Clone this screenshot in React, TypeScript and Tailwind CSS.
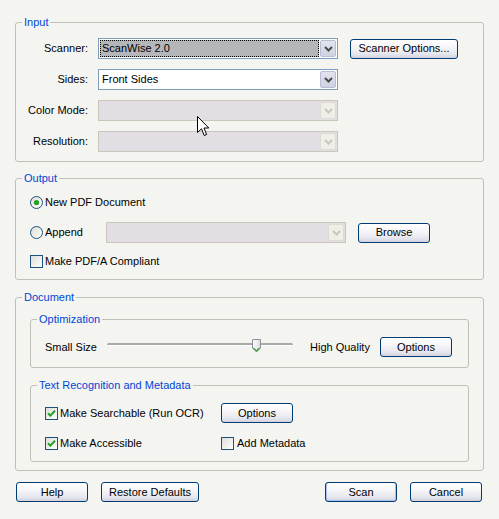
import React from "react";

const BTN =
  "h-[20px] rounded-[3px] border border-[#003c74] bg-[linear-gradient(180deg,#ffffff_0%,#f6f6f9_40%,#e6e6ee_78%,#d2d2e0_100%)] text-[11px] leading-[13px] text-black flex items-center justify-center";

function Btn({ label, cls }: { label: string; cls: string }) {
  return (
    <button type="button" className={`${BTN} ${cls}`}>
      {label}
    </button>
  );
}

function Chevron({ color }: { color: string }) {
  return (
    <svg width="9" height="6" viewBox="0 0 9 6">
      <path d="M1 1 L4.5 4.5 L8 1" fill="none" stroke={color} strokeWidth="2" />
    </svg>
  );
}

function Select({
  text,
  cls,
  disabled,
  focused,
}: {
  text?: string;
  cls: string;
  disabled?: boolean;
  focused?: boolean;
}) {
  return (
    <div
      className={`flex h-[21px] border ${cls} ${
        disabled ? "border-[#c9c7ba] bg-[#e3dee3]" : "border-[#7f9db9] bg-white"
      }`}
    >
      {focused ? (
        <div className="flex-1 p-[1px]">
          <div className="h-full flex items-center bg-[#b4b6ba] border border-dotted border-black pl-[1px]">
            {text}
          </div>
        </div>
      ) : (
        <div className="flex-1 flex items-center pl-[3px]">{text}</div>
      )}
      <div
        className={`w-[16px] my-[1px] mr-[1px] flex items-center justify-center rounded-[2px] border ${
          disabled
            ? "border-[#dedcd2] bg-[#efeee9]"
            : "border-[#b7bdd3] bg-[linear-gradient(180deg,#e2e3ee_0%,#d0d2e2_100%)]"
        }`}
      >
        <Chevron color={disabled ? "#c9c7bb" : "#4a4a4a"} />
      </div>
    </div>
  );
}

function Radio({ checked }: { checked?: boolean }) {
  return (
    <svg width="13" height="13" viewBox="0 0 13 13" className="shrink-0">
      <defs>
        <linearGradient id="rgrad" x1="0" y1="0" x2="1" y2="1">
          <stop offset="0" stopColor="#dcdcd5" />
          <stop offset="1" stopColor="#ffffff" />
        </linearGradient>
      </defs>
      <circle cx="6.5" cy="6.5" r="6" fill="url(#rgrad)" stroke="#1c5180" />
      {checked && <circle cx="6.5" cy="6.5" r="2.6" fill="#21a121" />}
    </svg>
  );
}

function Checkbox({ checked }: { checked?: boolean }) {
  return (
    <svg width="13" height="13" viewBox="0 0 13 13" className="shrink-0">
      <defs>
        <linearGradient id="cgrad" x1="0" y1="0" x2="1" y2="1">
          <stop offset="0" stopColor="#dcdcd7" />
          <stop offset="1" stopColor="#ffffff" />
        </linearGradient>
      </defs>
      <rect x="0.5" y="0.5" width="12" height="12" fill="url(#cgrad)" stroke="#1c5180" />
      {checked && (
        <path d="M3 6.2 L5.3 8.6 L10 3.8" fill="none" stroke="#21a121" strokeWidth="2" />
      )}
    </svg>
  );
}

const FS = "rounded-[3px] border border-[#c0c0bb]";
const LG = "ml-[6px] px-[2px] leading-[14px] text-[#0046d5]";

export default function App() {
  return (
    <div className="relative w-[499px] h-[519px] overflow-hidden bg-[#f4f5f1] px-[15px] pt-[15px] font-['Liberation_Sans',Arial,sans-serif] text-[11px] leading-[13px] text-black">
      {/* Input */}
      <fieldset className={FS}>
        <legend className={LG}>Input</legend>
        <div className="flex flex-col gap-[10px] pt-[9px] pb-[9px]">
          <div className="flex items-center h-[21px]">
            <div className="w-[72px] mr-[10px] text-right">Scanner:</div>
            <Select cls="w-[240px]" text="ScanWise 2.0" focused />
            <Btn label="Scanner Options..." cls="w-[108px] ml-[12px]" />
          </div>
          <div className="flex items-center h-[21px]">
            <div className="w-[72px] mr-[10px] text-right">Sides:</div>
            <Select cls="w-[240px]" text="Front Sides" />
          </div>
          <div className="flex items-center h-[21px]">
            <div className="w-[72px] mr-[10px] text-right">Color Mode:</div>
            <Select cls="w-[240px]" disabled />
          </div>
          <div className="flex items-center h-[21px]">
            <div className="w-[72px] mr-[10px] text-right">Resolution:</div>
            <Select cls="w-[240px]" disabled />
          </div>
        </div>
      </fieldset>

      {/* Output */}
      <fieldset className={`${FS} mt-[9px]`}>
        <legend className={LG}>Output</legend>
        <div className="pl-[14px] pt-[7px] pb-[7px]">
          <div className="flex items-center h-[21px] gap-[2px]">
            <Radio checked />
            <span>New PDF Document</span>
          </div>
          <div className="mt-[9px] flex items-center h-[21px]">
            <div className="w-[76px] flex items-center gap-[2px]">
              <Radio />
              <span>Append</span>
            </div>
            <Select cls="w-[240px]" disabled />
            <Btn label="Browse" cls="w-[72px] ml-[12px]" />
          </div>
          <div className="mt-[8px] flex items-center h-[21px] gap-[2px]">
            <Checkbox />
            <span>Make PDF/A Compliant</span>
          </div>
        </div>
      </fieldset>

      {/* Document */}
      <fieldset className={`${FS} mt-[10px]`}>
        <legend className={LG}>Document</legend>
        <div className="px-[14px] pt-[8px] pb-[8px]">
          <fieldset className={FS}>
            <legend className={LG}>Optimization</legend>
            <div className="flex items-center h-[22px] pl-[14px] mt-[10px] mb-[9px]">
              <div className="w-[62px]">Small Size</div>
              <div className="relative w-[186px] h-[22px]">
                <div className="absolute left-0 right-0 top-[7px] h-[3px] rounded-[2px] border-t-2 border-[#a9a9a5] bg-white"></div>
                <svg
                  width="9"
                  height="14"
                  viewBox="0 0 9 14"
                  className="absolute left-[145px] top-[3px]"
                >
                  <defs>
                    <linearGradient id="tgrad" x1="0" y1="0" x2="1" y2="0">
                      <stop offset="0" stopColor="#ffffff" />
                      <stop offset="1" stopColor="#dcdcd8" />
                    </linearGradient>
                  </defs>
                  <path
                    d="M0.5 0.5 H8.5 V9 L4.5 13 L0.5 9 Z"
                    fill="url(#tgrad)"
                    stroke="#8c909c"
                  />
                  <path d="M1.5 9 L4.5 12 L7.5 9" fill="none" stroke="#2ea52e" strokeWidth="1.2" />
                </svg>
              </div>
              <div className="ml-[17px] w-[70px]">High Quality</div>
              <Btn label="Options" cls="w-[72px]" />
            </div>
          </fieldset>

          <fieldset className={`${FS} mt-[10px]`}>
            <legend className={LG}>Text Recognition and Metadata</legend>
            <div className="pl-[14px] pt-[10px] pb-[7px]">
              <div className="flex items-center h-[22px]">
                <div className="w-[176px] flex items-center gap-[2px]">
                  <Checkbox checked />
                  <span>Make Searchable (Run OCR)</span>
                </div>
                <Btn label="Options" cls="w-[72px]" />
              </div>
              <div className="mt-[8px] flex items-center h-[22px]">
                <div className="w-[176px] flex items-center gap-[2px]">
                  <Checkbox checked />
                  <span>Make Accessible</span>
                </div>
                <div className="flex items-center gap-[3px]">
                  <Checkbox />
                  <span>Add Metadata</span>
                </div>
              </div>
            </div>
          </fieldset>
        </div>
      </fieldset>

      {/* Bottom buttons */}
      <div className="mt-[11px] flex justify-between">
        <div className="ml-[1px] flex gap-[13px]">
          <Btn label="Help" cls="w-[72px]" />
          <Btn label="Restore Defaults" cls="w-[98px]" />
        </div>
        <div className="mr-[2px] flex gap-[13px]">
          <Btn
            label="Scan"
            cls="w-[72px] shadow-[inset_1px_0_0_#a9c1ee,inset_-1px_0_0_#a9c1ee,inset_0_-1px_0_#a9c1ee]"
          />
          <Btn label="Cancel" cls="w-[72px]" />
        </div>
      </div>

      {/* Mouse cursor */}
      <svg
        width="13"
        height="21"
        viewBox="0 0 13 21"
        className="absolute left-[197px] top-[116px]"
      >
        <path
          d="M0.5 0.5 V16.5 L4.5 12.8 L7.2 19.5 L9.6 18.5 L7 12 H11.8 Z"
          fill="#ffffff"
          stroke="#000000"
          strokeWidth="1"
          strokeLinejoin="miter"
        />
      </svg>
    </div>
  );
}
